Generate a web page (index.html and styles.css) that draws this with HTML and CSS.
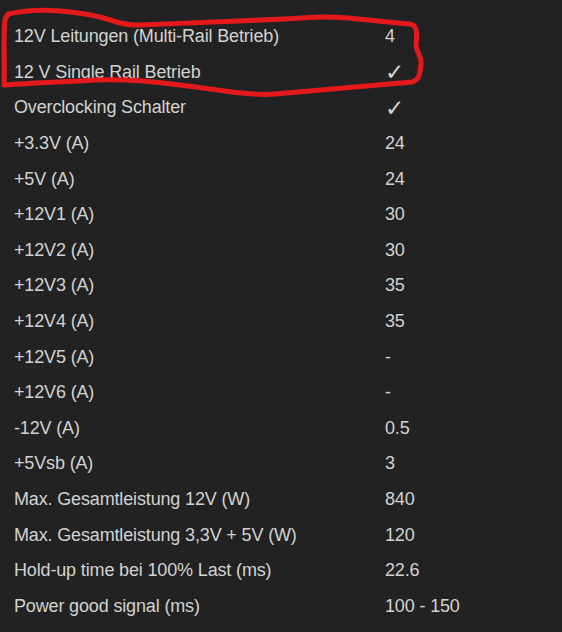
FILE: index.html
```html
<!DOCTYPE html>
<html lang="de">
<head>
  <meta charset="UTF-8">
  <title>Netzteil Spezifikationen</title>
  <meta name="viewport" content="width=device-width, initial-scale=1.0">
  <link rel="stylesheet" href="styles.css">
</head>
<body>
  <div class="sheet">
    <table class="specs">
      <tbody>
        <tr><td>12V Leitungen (Multi-Rail Betrieb)</td><td>4</td></tr>
        <tr><td>12 V Single Rail Betrieb</td><td><span class="check">&#10003;</span></td></tr>
        <tr><td>Overclocking Schalter</td><td><span class="check">&#10003;</span></td></tr>
        <tr><td>+3.3V (A)</td><td>24</td></tr>
        <tr><td>+5V (A)</td><td>24</td></tr>
        <tr><td>+12V1 (A)</td><td>30</td></tr>
        <tr><td>+12V2 (A)</td><td>30</td></tr>
        <tr><td>+12V3 (A)</td><td>35</td></tr>
        <tr><td>+12V4 (A)</td><td>35</td></tr>
        <tr><td>+12V5 (A)</td><td>-</td></tr>
        <tr><td>+12V6 (A)</td><td>-</td></tr>
        <tr><td>-12V (A)</td><td>0.5</td></tr>
        <tr><td>+5Vsb (A)</td><td>3</td></tr>
        <tr><td>Max. Gesamtleistung 12V (W)</td><td>840</td></tr>
        <tr><td>Max. Gesamtleistung 3,3V + 5V (W)</td><td>120</td></tr>
        <tr><td>Hold-up time bei 100% Last (ms)</td><td>22.6</td></tr>
        <tr><td>Power good signal (ms)</td><td>100 - 150</td></tr>
      </tbody>
    </table>

    <!-- hand drawn marker round the first two rows -->
    <svg class="marker" width="562" height="110" viewBox="0 0 562 110">
      <path d="M8,14 C30,9 60,8 100,17 C115,21 122,25 135,25 C190,23 250,21 320,17
               C350,16 375,22 410,24 C418,25 417,35 416,45 C416,52 422,56 421,64
               C420,72 420,80 412,82 C380,85 330,89 275,94 C250,96 220,90 180,85
               C150,81 120,79 95,80 C60,82 30,83 4,85
               C5,65 3,35 5,20 C6,16 7,15 9,14"
            fill="none" stroke="#e3191c" stroke-width="5" stroke-linecap="round" stroke-linejoin="round"/>
    </svg>
  </div>
</body>
</html>
```

FILE: styles.css
```css
body {
  margin: 0;
  background: #222222;
  font-family: "Liberation Sans", Arial, sans-serif;
  color: #d2d2d2;
}

.sheet {
  position: relative;
  padding: 19px 0 0 14px;
}

.specs {
  border-collapse: collapse;
  font-size: 18px;
  letter-spacing: -0.15px;
}

.specs td {
  padding: 0;
  height: 35.6px;
  vertical-align: middle;
  white-space: nowrap;
}

.specs td:first-child {
  width: 371px;
}

.check {
  font-family: "DejaVu Sans", sans-serif;
  font-size: 23px;
  line-height: 1;
  position: relative;
  top: 1px;
}

.marker {
  position: absolute;
  top: 0;
  left: 0;
  pointer-events: none;
}
```
